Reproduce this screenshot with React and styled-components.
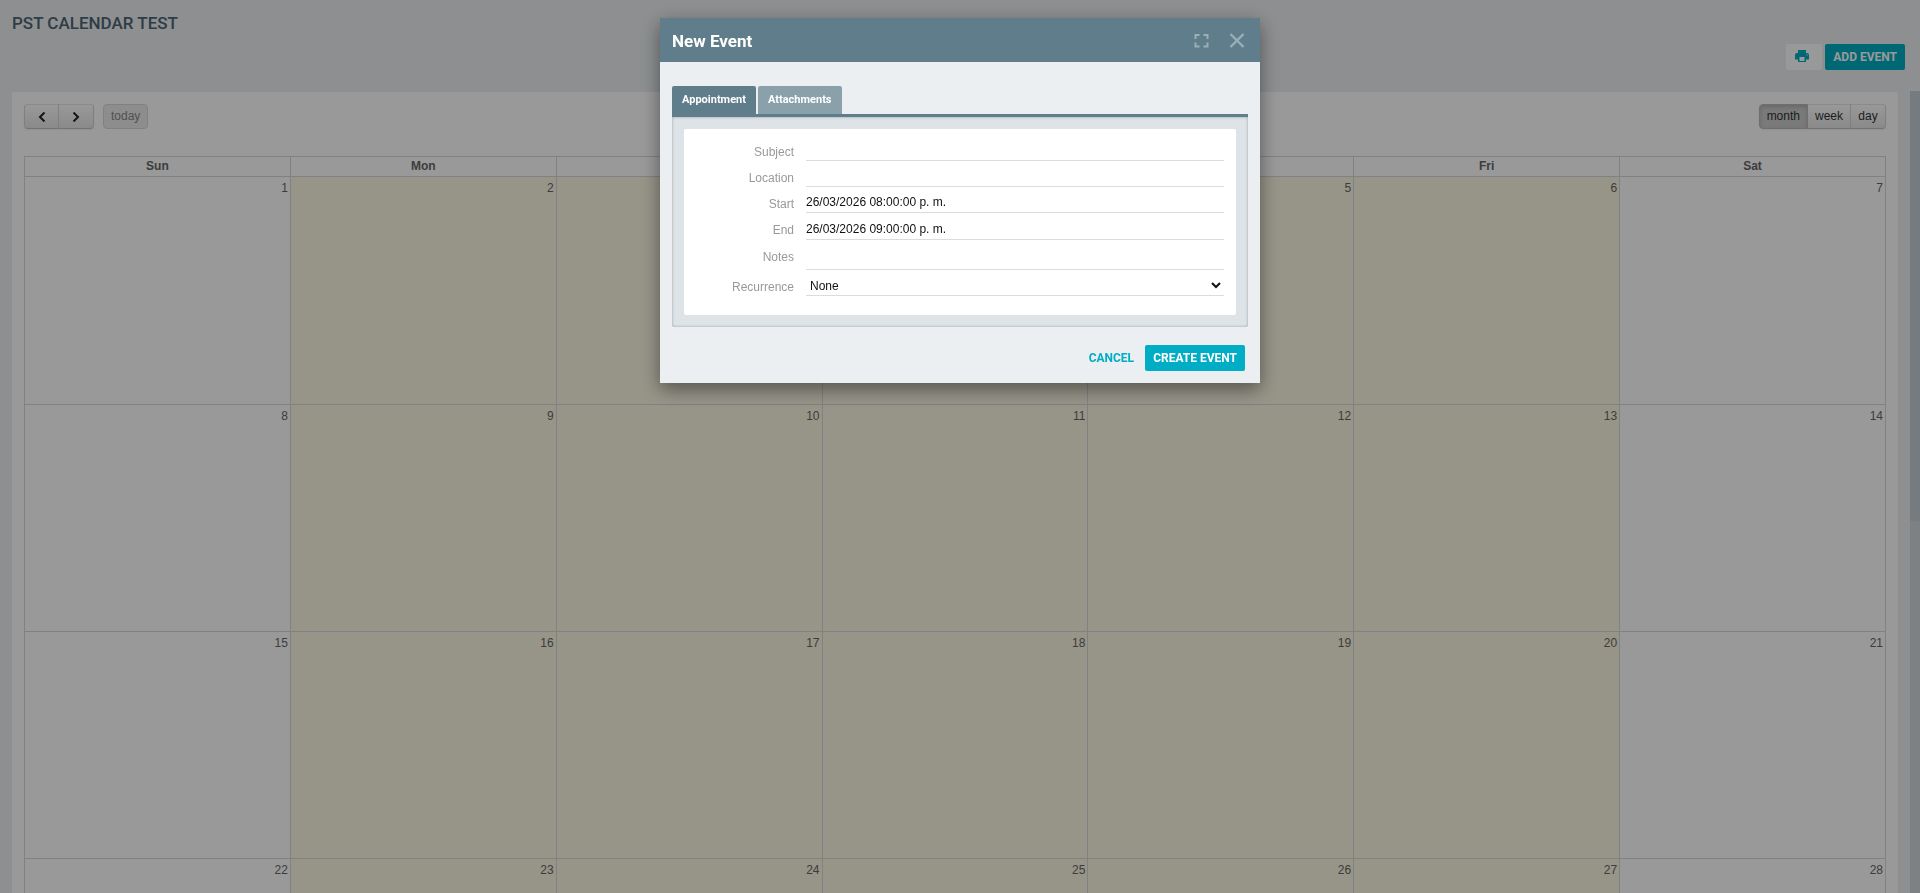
import React from "react";
import styled, { createGlobalStyle, css } from "styled-components";

const Global = createGlobalStyle`
  *, *::before, *::after { box-sizing: border-box; }
  body {
    margin: 0;
    overflow: hidden;
    background: #ebeff2;
    font: 12px/16px "Liberation Sans", Arial, sans-serif;
    color: #666;
  }
  button, input, select, textarea { font: inherit; margin: 0; }
`;

const roboto = css`
  font-family: Roboto, "Liberation Sans", sans-serif;
`;

const Page = styled.div`
  display: flex;
  flex-direction: column;
  height: 100vh;
`;

const PageHeader = styled.header`
  flex: none;
  display: flex;
  flex-direction: column;
  padding: 11px 15px 21px 12px;
`;

const PageTitle = styled.h1`
  ${roboto}
  margin: 0 0 9px;
  font-size: 17px;
  line-height: 24px;
  font-weight: 500;
  color: #4e6673;
`;

const Actions = styled.div`
  display: flex;
  justify-content: flex-end;
  gap: 3px;
`;

const ActionButton = styled.button`
  ${roboto}
  height: 26px;
  padding: 0 8px;
  border: 0;
  border-radius: 2px;
  font-size: 12px;
  line-height: 26px;
  font-weight: 700;
  background: ${(p) => (p.$plain ? "transparent" : "#00adc4")};
  color: ${(p) => (p.$plain ? "#00adc4" : "#fff")};
`;

const PrintButton = styled.button`
  display: flex;
  align-items: center;
  width: 36px;
  height: 26px;
  padding: 0 8px;
  border: 0;
  border-radius: 2px;
  background: #fff;
  color: #00adc4;
`;

const ScrollArea = styled.main`
  flex: 1;
  min-height: 0;
  display: grid;
  grid-template-columns: minmax(0, 1fr) 10px;
  grid-template-rows: minmax(0, 1fr);
`;

const Viewport = styled.div`
  overflow: hidden;
  padding: 1px 12px 0;
`;

const Track = styled.div`
  display: grid;
  grid-template-rows: 430fr 372fr;
  background: #d0d8dc;
`;

const Thumb = styled.div`
  background: #c3cdd3;
`;

const Card = styled.section`
  padding: 12px;
  border-radius: 2px;
  background: #fff;
`;

const Toolbar = styled.div`
  display: flex;
  justify-content: space-between;
  margin-bottom: 27px;
`;

const ToolGroup = styled.div`
  display: flex;
  gap: 9px;
`;

const ButtonGroup = styled.div`
  display: flex;
  border-radius: 4px;
  box-shadow: 0 1px 2px rgba(0, 0, 0, 0.05);
`;

const CalButton = styled.button`
  display: flex;
  align-items: center;
  justify-content: center;
  height: 25px;
  min-width: 35px;
  padding: 0 7px ${(p) => (p.$icon ? 0 : 2)}px;
  border: 1px solid;
  border-color: #e6e6e6 #d4d4d4 #bfbfbf;
  border-radius: 4px;
  background: linear-gradient(#fff, #e6e6e6);
  color: #333;
  ${ButtonGroup} &:not(:first-child) {
    border-left-width: 0;
    border-top-left-radius: 0;
    border-bottom-left-radius: 0;
  }
  ${ButtonGroup} &:not(:last-child) {
    border-top-right-radius: 0;
    border-bottom-right-radius: 0;
  }
  ${(p) =>
    p.$active &&
    css`
      background: #ccc;
      border-color: #b8b8b8;
      box-shadow: inset 0 2px 4px rgba(0, 0, 0, 0.15);
    `}
  &:disabled {
    background: #ececec;
    border-color: #d8d8d8;
    color: #858585;
  }
`;

const Month = styled.table`
  width: 100%;
  table-layout: fixed;
  border-collapse: collapse;
`;

const DayName = styled.th`
  height: 20px;
  padding: 0 0 2px;
  border: 1px solid #d8d8db;
  font-weight: 700;
`;

const Day = styled.td`
  height: 227px;
  padding: 3px 2px;
  border: 1px solid #d8d8db;
  vertical-align: top;
  text-align: right;
  background: ${(p) => (p.$business ? "#fcf8e3" : "transparent")};
  tr:first-child > & {
    height: 228px;
  }
`;

const Backdrop = styled.div`
  position: fixed;
  inset: 0;
  display: flex;
  justify-content: center;
  align-items: flex-start;
  padding: 18px 12px;
  background: rgba(0, 0, 0, 0.4);
`;

const Dialog = styled.div`
  width: 100%;
  max-width: 600px;
  background: #ebeff2;
  box-shadow: 0 6px 18px rgba(0, 0, 0, 0.45);
`;

const DialogHeader = styled.header`
  display: flex;
  align-items: center;
  gap: 20px;
  height: 44px;
  padding: 0 15px 0 12px;
  background: #607d8b;
`;

const DialogTitle = styled.h2`
  ${roboto}
  flex: 1;
  margin: 0;
  padding-top: 2px;
  font-size: 17px;
  line-height: 24px;
  font-weight: 700;
  color: #fff;
`;

const IconButton = styled.button`
  display: flex;
  padding: 0;
  border: 0;
  background: none;
  color: #9bafb8;
`;

const DialogBody = styled.div`
  padding: 24px 12px 0;
`;

const Tabs = styled.div`
  display: flex;
  gap: 2px;
  border-bottom: 3px solid #607d8b;
`;

const Tab = styled.button`
  ${roboto}
  height: 28px;
  padding: 0 10px;
  border: 0;
  border-radius: 2px 2px 0 0;
  font-size: 11px;
  font-weight: 700;
  color: #fff;
  background: ${(p) => (p.$active ? "#607d8b" : "#8aa1ac")};
`;

const Panel = styled.div`
  padding: 12px;
  border-radius: 0 0 2px 2px;
  background: #dde3e6;
  box-shadow: inset 0 0 3px rgba(0, 0, 0, 0.3);
`;

const Form = styled.form`
  display: flex;
  flex-direction: column;
  padding: 6px 12px 19px;
  border-radius: 2px;
  background: #fff;
`;

const Row = styled.div`
  display: grid;
  grid-template-columns: 98px minmax(0, 1fr);
  column-gap: 12px;
  height: ${(p) => p.$height || 26}px;
  align-items: end;
`;

const Label = styled.label`
  align-self: start;
  margin-top: 9px;
  text-align: right;
  color: #999;
`;

const field = css`
  display: block;
  width: 100%;
  height: 21px;
  padding: 0;
  border: 0;
  border-bottom: 1px solid #dcdcdc;
  border-radius: 0;
  outline: 0;
  background: transparent;
  color: #111;
`;

const Input = styled.input`
  ${field}
`;

const Notes = styled.textarea`
  ${field}
  resize: none;
  overflow: hidden;
`;

const Select = styled.select`
  ${field}
  padding-top: 2px;
`;

const DialogFooter = styled.footer`
  display: flex;
  justify-content: flex-end;
  gap: 3px;
  padding: 18px 15px 12px;
`;

const Chevron = ({ d }) => (
  <svg width="8" height="10" viewBox="0 0 8 10" fill="none" stroke="#222" strokeWidth="2" aria-hidden="true">
    <path d={d} />
  </svg>
);

const PrinterIcon = () => (
  <svg width="16" height="14" viewBox="0 0 16 14" aria-hidden="true">
    <path fill="currentColor" d="M4 0h8v3H4zM3 3h10a2 2 0 0 1 2 2v4.500h-3V12H4V9.500H1V5a2 2 0 0 1 2-2z" />
    <path fill="#fff" d="M5.500 7h5v4h-5zM12.500 4.500h1v1h-1z" />
  </svg>
);

const ExpandIcon = () => (
  <svg width="15" height="15" viewBox="0 0 15 15" fill="none" stroke="currentColor" strokeWidth="2" aria-hidden="true">
    <path d="M1.5 6V2H5.500M9.500 2h4v4M13.500 9.500v4h-4M5.500 13.500h-4v-4" />
  </svg>
);

const CloseIcon = () => (
  <svg width="16" height="15" viewBox="0 0 16 15" fill="none" stroke="currentColor" strokeWidth="2.3" aria-hidden="true">
    <path d="M1.500 1l13 13M14.500 1l-13 13" />
  </svg>
);

const dayNames = ["Sun", "Mon", "Tue", "Wed", "Thu", "Fri", "Sat"];
const weeks = [0, 1, 2, 3].map((w) => dayNames.map((_, d) => w * 7 + d + 1));

export default function App() {
  return (
    <>
      <Global />
      <Page>
        <PageHeader>
          <PageTitle>PST CALENDAR TEST</PageTitle>
          <Actions>
            <PrintButton type="button" aria-label="Print">
              <PrinterIcon />
            </PrintButton>
            <ActionButton type="button">ADD EVENT</ActionButton>
          </Actions>
        </PageHeader>
        <ScrollArea>
          <Viewport>
            <Card>
              <Toolbar>
                <ToolGroup>
                  <ButtonGroup>
                    <CalButton type="button" aria-label="Previous" $icon>
                      <Chevron d="M6.500 0.500L2 5l4.500 4.500" />
                    </CalButton>
                    <CalButton type="button" aria-label="Next" $icon>
                      <Chevron d="M1.500 0.500L6 5l-4.500 4.500" />
                    </CalButton>
                  </ButtonGroup>
                  <CalButton type="button" disabled>today</CalButton>
                </ToolGroup>
                <ButtonGroup>
                  <CalButton type="button" $active>month</CalButton>
                  <CalButton type="button">week</CalButton>
                  <CalButton type="button">day</CalButton>
                </ButtonGroup>
              </Toolbar>
              <Month>
                <thead>
                  <tr>
                    {dayNames.map((n) => (
                      <DayName key={n} scope="col">{n}</DayName>
                    ))}
                  </tr>
                </thead>
                <tbody>
                  {weeks.map((week) => (
                    <tr key={week[0]}>
                      {week.map((n, i) => (
                        <Day key={n} $business={i > 0 && i < 6}>{n}</Day>
                      ))}
                    </tr>
                  ))}
                </tbody>
              </Month>
            </Card>
          </Viewport>
          <Track>
            <Thumb />
          </Track>
        </ScrollArea>
      </Page>
      <Backdrop>
        <Dialog role="dialog" aria-modal="true" aria-labelledby="dialog-title">
          <DialogHeader>
            <DialogTitle id="dialog-title">New Event</DialogTitle>
            <IconButton type="button" aria-label="Maximize"><ExpandIcon /></IconButton>
            <IconButton type="button" aria-label="Close"><CloseIcon /></IconButton>
          </DialogHeader>
          <DialogBody>
            <Tabs role="tablist">
              <Tab type="button" role="tab" aria-selected="true" $active>Appointment</Tab>
              <Tab type="button" role="tab" aria-selected="false">Attachments</Tab>
            </Tabs>
            <Panel role="tabpanel">
              <Form id="event-form">
                <Row>
                  <Label htmlFor="subject">Subject</Label>
                  <Input id="subject" />
                </Row>
                <Row>
                  <Label htmlFor="location">Location</Label>
                  <Input id="location" />
                </Row>
                <Row>
                  <Label htmlFor="start">Start</Label>
                  <Input id="start" defaultValue="26/03/2026 08:00:00 p. m." />
                </Row>
                <Row $height={27}>
                  <Label htmlFor="end">End</Label>
                  <Input id="end" defaultValue="26/03/2026 09:00:00 p. m." />
                </Row>
                <Row $height={30}>
                  <Label htmlFor="notes">Notes</Label>
                  <Notes id="notes" rows={1} />
                </Row>
                <Row>
                  <Label htmlFor="recurrence">Recurrence</Label>
                  <Select id="recurrence" defaultValue="None">
                    <option>None</option>
                  </Select>
                </Row>
              </Form>
            </Panel>
          </DialogBody>
          <DialogFooter>
            <ActionButton type="button" $plain>CANCEL</ActionButton>
            <ActionButton type="submit" form="event-form">CREATE EVENT</ActionButton>
          </DialogFooter>
        </Dialog>
      </Backdrop>
    </>
  );
}
